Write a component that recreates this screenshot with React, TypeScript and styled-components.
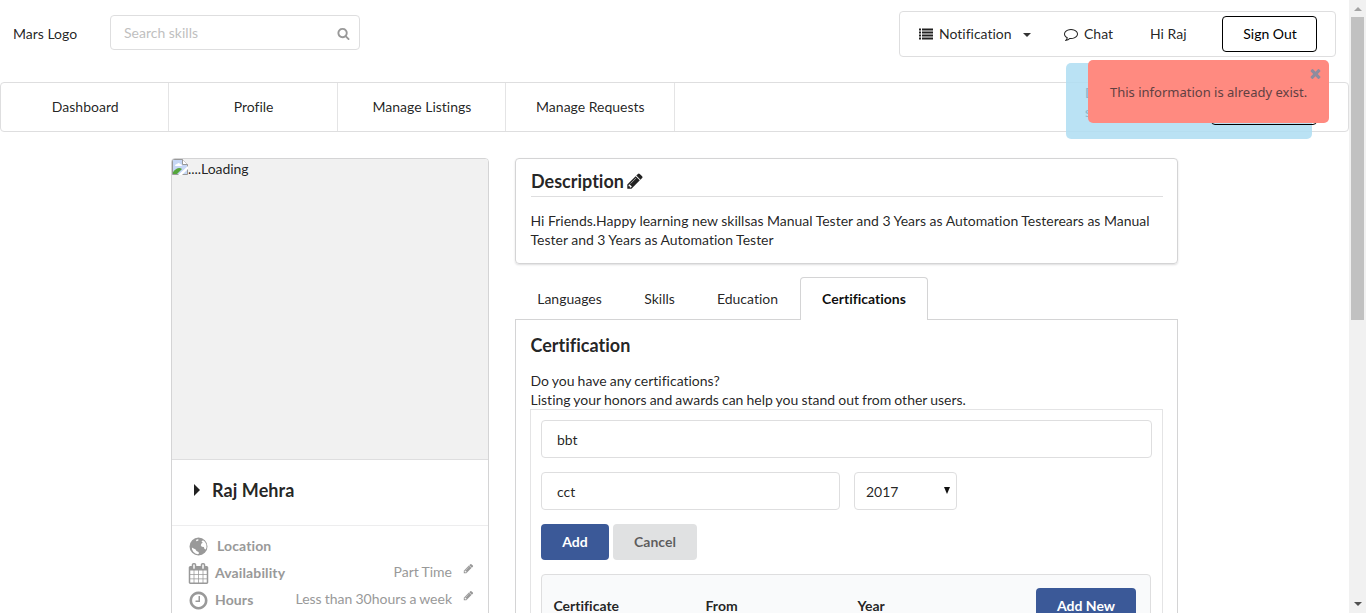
import React from "react";
import styled, { createGlobalStyle, css } from "styled-components";

const Global = createGlobalStyle`
  * { box-sizing: border-box; }
  html, body { margin: 0; padding: 0; overflow: hidden; }
  body {
    background: #fff;
    color: rgba(0,0,0,.87);
    font: 14px/19px Lato, "Liberation Sans", sans-serif;
    font-variant-ligatures: none;
  }
  h3, p { margin: 0; }
  input, button { font-family: inherit; }
`;

const paths = {
  search: "M1216 832q0-185-131.5-316.5t-316.5-131.5-316.5 131.5-131.5 316.5 131.5 316.5 316.5 131.5 316.5-131.5 131.5-316.5zm512 832q0 52-38 90t-90 38q-54 0-90-38l-343-342q-179 124-399 124-143 0-273.5-55.5t-225-150-150-225-55.5-273.5 55.5-273.5 150-225 225-150 273.5-55.5 273.5 55.5 225 150 150 225 55.5 273.5q0 220-124 399l343 343q37 37 37 90z",
  pencil: "M491 1536l91-91-235-235-91 91v107h128v128h107zm523-928q0-22-22-22-10 0-17 7l-542 542q-7 7-7 17 0 22 22 22 10 0 17-7l542-542q7-7 7-17zm-54-192l416 416-832 832h-416v-416zm683 96q0 53-37 90l-166 166-416-416 166-165q36-38 90-38 53 0 91 38l235 234q37 39 37 91z",
  calendar: "M192 1664h288v-288h-288v288zm352 0h320v-288h-320v288zm-352-352h288v-320h-288v320zm352 0h320v-320h-320v320zm-352-384h288v-288h-288v288zm736 736h320v-288h-320v288zm-384-736h320v-288h-320v288zm768 736h288v-288h-288v288zm-384-352h320v-320h-320v320zm-352-864v-288q0-13-9.5-22.5t-22.5-9.5h-64q-13 0-22.5 9.5t-9.5 22.5v288q0 13 9.5 22.5t22.5 9.5h64q13 0 22.5-9.5t9.5-22.5zm736 864h288v-320h-288v320zm-384-384h320v-288h-320v288zm384 0h288v-288h-288v288zm32-480v-288q0-13-9.5-22.5t-22.5-9.5h-64q-13 0-22.5 9.5t-9.5 22.5v288q0 13 9.5 22.5t22.5 9.5h64q13 0 22.5-9.5t9.5-22.5zm384-64v1280q0 52-38 90t-90 38h-1408q-52 0-90-38t-38-90v-1280q0-52 38-90t90-38h128v-96q0-66 47-113t113-47h64q66 0 113 47t47 113v96h384v-96q0-66 47-113t113-47h64q66 0 113 47t47 113v96h128q52 0 90 38t38 90z",
  clock: "M1024 544v448q0 14-9 23t-23 9h-320q-14 0-23-9t-9-23v-64q0-14 9-23t23-9h224v-352q0-14 9-23t23-9h64q14 0 23 9t9 23zm416 352q0-148-73-273t-198-198-273-73-273 73-198 198-73 273 73 273 198 198 273 73 273-73 198-198 73-273zm224 0q0 209-103 385.5t-279.5 279.5-385.5 103-385.5-103-279.5-279.5-103-385.5 103-385.5 279.5-279.5 385.5-103 385.5 103 279.5 279.5 103 385.5z",
  comment: "M896 384q-204 0-381.5 69.5t-282 187.5-104.5 255q0 112 71.5 213.5t201.5 175.5l87 50-27 96q-24 91-70 172 152-63 275-171l43-38 57 6q69 8 130 8 204 0 381.5-69.5t282-187.5 104.5-255-104.5-255-282-187.5-381.5-69.5zm896 512q0 174-120 321.5t-326 233-450 85.5q-70 0-145-8-198 175-460 242-49 14-114 22h-5q-15 0-27-10.5t-16-27.5v-1q-3-4-.5-12t2-10 4.5-9.5l6-9 7-8.5 8-9q7-8 31-34.5t34.5-38 31-39.5 32.5-51 27-59 26-76q-157-89-247.5-220t-90.5-281q0-174 120-321.5t326-233 450-85.5 450 85.5 326 233 120 321.5z",
  times: "M1490 1322q0 40-28 68l-136 136q-28 28-68 28t-68-28l-294-294-294 294q-28 28-68 28t-68-28l-136-136q-28-28-28-68t28-68l294-294-294-294q-28-28-28-68t28-68l136-136q28-28 68-28t68 28l294 294 294-294q28-28 68-28t68 28l136 136q28 28 28 68t-28 68l-294 294 294 294q28 28 28 68z",
  list: "M0 192h256v256H0zM384 192h1408v256H384zM0 576h256v256H0zM384 576h1408v256H384zM0 960h256v256H0zM384 960h1408v256H384zM0 1344h256v256H0zM384 1344h1408v256H384z",
  globe: "M896 128a768 768 0 1 0 0 1536a768 768 0 1 0 0-1536zM1150 470l130-110 160 130 120 210 20 260-60 190-110-40-60-170-170-20-90-130 60-160 110-50zM330 980l150 80 150 60 100 150 170 90 40 130-110 70-200-60-180-160-100-180zM700 330l150-60 70 80-130 80-90 10z",
};

const Svg = styled.svg<{ $size: number }>`
  display: block;
  flex: none;
  width: ${(p) => p.$size}px;
  height: ${(p) => p.$size}px;
  fill: currentColor;
`;
const Icon = ({ name, size, className }: { name: keyof typeof paths; size: number; className?: string }) => (
  <Svg className={className} $size={size} viewBox="0 0 1792 1792"><path fillRule={name === "globe" ? "evenodd" : "nonzero"} d={paths[name]} /></Svg>
);

const Screen = styled.div`
  display: flex;
  width: 1366px;
  height: 613px;
  overflow: hidden;
  position: relative;
`;
const Page = styled.div`width: 1349px; flex: none;`;
const Header = styled.header`
  display: flex;
  align-items: flex-start;
  height: 82px;
  padding: 11px 13px 0;
`;
const Logo = styled.div`width: 97px; padding-top: 13px;`;
const Search = styled.div`
  display: flex;
  align-items: center;
  justify-content: space-between;
  width: 250px;
  height: 35px;
  margin: 4px auto 0 0;
  padding: 2px 9px 0 13px;
  border: 1px solid #dededf;
  border-radius: 4px;
  color: #999;
`;
const SearchInput = styled.input`
  width: 180px;
  padding: 0 0 2px;
  border: 0;
  outline: 0;
  background: none;
  font-size: 14px;
  &::placeholder { color: #bfbfbf; opacity: 1; }
`;
const UserMenu = styled.nav`
  display: flex;
  align-items: center;
  width: 437px;
  height: 46px;
  padding: 0 18px 0 19px;
  border: 1px solid #dededf;
  border-radius: 4px;
`;
const MenuItem = styled.div<{ $w: number; $gap?: number }>`
  display: flex;
  align-items: center;
  gap: ${(p) => p.$gap ?? 6}px;
  width: ${(p) => p.$w}px;
  padding-bottom: 1px;
`;
const Caret = styled.span`
  margin: 2px 0 0 5px;
  border: 4px solid transparent;
  border-top-color: #333;
  border-bottom: 0;
`;
const SignOut = styled.button`
  width: 95px;
  height: 36px;
  margin-left: auto;
  padding: 0 0 2px 1px;
  border: 1px solid #000;
  border-radius: 4px;
  background: #fff;
  color: #000;
  font-size: 14px;
`;
const Tabs = styled.nav`
  display: flex;
  height: 50px;
  border: 1px solid #dededf;
  border-radius: 4px;
`;
const NavTab = styled.div`
  display: flex;
  align-items: center;
  justify-content: center;
  width: 168.4px;
  padding: 0 0 2px 1px;
  border-right: 1px solid #e4e4e5;
`;
const Content = styled.main`
  display: flex;
  align-items: flex-start;
  gap: 26px;
  padding: 26px 0 0 171px;
`;
const Card = styled.aside`
  width: 318px;
  height: 640px;
  border: 1px solid #d4d4d5;
  border-radius: 4px;
  overflow: hidden;
`;
const Photo = styled.div`
  display: flex;
  height: 301px;
  background: #f1f1f1;
  border-bottom: 1px solid #dededf;
  line-height: 20px;
  letter-spacing: -.05px;
`;
const NameRow = styled.div`
  display: flex;
  align-items: center;
  height: 66px;
  padding: 0 0 4px 22px;
  border-bottom: 1px solid #ededee;
  font-size: 18px;
  font-weight: 700;
  letter-spacing: .08px;
`;
const RightCaret = styled.span`
  margin: 0 12px 2px 0;
  border: 6px solid transparent;
  border-left-color: #222;
  border-right: 0;
`;
const Details = styled.div`padding: 7px 14px 0 16px; color: #999;`;
const Detail = styled.div<{ $gap: number }>`
  display: flex;
  align-items: center;
  height: 27px;
  gap: ${(p) => p.$gap}px;
  strong { font-weight: 700; padding-bottom: 2px; letter-spacing: .12px; }
  span { margin-left: auto; padding-bottom: 4px; word-spacing: -.5px; }
`;
const SmallPencil = styled(Icon)`margin: 0 0 11px 5px;`;
const Main = styled.div`width: 663px;`;
const Description = styled.section`
  height: 106px;
  padding: 12px 14px 12px 15px;
  border: 1px solid #d4d4d5;
  border-radius: 4px;
  box-shadow: 0 1px 2px rgba(34,36,38,.15);
  p { margin-left: -.5px; word-spacing: -.1px; }
`;
const Heading = styled.h3<{ $line?: boolean }>`
  display: flex;
  align-items: center;
  gap: 2px;
  font-size: 18px;
  line-height: 22px;
  font-weight: 700;
  ${(p) => p.$line && css`height: 26px; padding-bottom: 5px; margin-bottom: 14px; border-bottom: 1px solid #dededf;`}
`;
const SubTabs = styled.div`
  display: flex;
  height: 43px;
  margin: 13px 0 -1px;
  position: relative;
`;
const SubTab = styled.div<{ $w: number; $active?: boolean }>`
  display: flex;
  align-items: center;
  justify-content: center;
  width: ${(p) => p.$w}px;
  ${(p) => p.$active && css`
    padding-bottom: 1px;
    background: #fff;
    border: 1px solid #d4d4d5;
    border-bottom: 0;
    border-radius: 4px 4px 0 0;
    font-weight: 700;
    color: rgba(0,0,0,.95);
  `}
`;
const Panel = styled.section`
  height: 500px;
  padding: 14px;
  border: 1px solid #d4d4d5;
  ${Heading} { margin-left: .5px; }
`;
const Intro = styled.p`margin: 15px 0 0 .5px; word-spacing: -.5px;`;
const FormBox = styled.div`
  height: 400px;
  padding: 10px;
  border: 1px solid #e4e4e5;
`;
const Row = styled.div<{ $gap: number }>`display: flex; gap: ${(p) => p.$gap}px; margin-bottom: 14px;`;
const Field = styled.input<{ $w: number }>`
  width: ${(p) => p.$w}px;
  height: 38px;
  padding: 0 15px;
  border: 1px solid #dededf;
  border-radius: 4px;
  color: rgba(0,0,0,.87);
  font-size: 14px;
  outline: 0;
`;
const Select = styled.div`
  display: flex;
  align-items: center;
  justify-content: space-between;
  width: 103px;
  height: 38px;
  padding: 0 6px 0 11px;
  border: 1px solid #dededf;
  border-radius: 4px;
`;
const SelectArrow = styled.i`
  margin-bottom: 2px;
  border: 3.5px solid transparent;
  border-top: 7px solid #111;
  border-bottom: 0;
`;
const Button = styled.button<{ $w: number; $muted?: boolean }>`
  width: ${(p) => p.$w}px;
  height: 36px;
  padding: 0 0 2px;
  border: 0;
  border-radius: 4px;
  background: ${(p) => (p.$muted ? "#e0e1e2" : "#3b5998")};
  color: ${(p) => (p.$muted ? "rgba(0,0,0,.6)" : "#fff")};
  font-size: 14px;
  font-weight: 700;
`;
const TableHead = styled.div`
  display: flex;
  align-items: flex-start;
  width: 610px;
  height: 70px;
  padding: 13px 14px 0 11.5px;
  border: 1px solid #dededf;
  border-radius: 4px 4px 0 0;
  background: #f9fafb;
`;
const Th = styled.div<{ $w: number }>`width: ${(p) => p.$w}px; padding-top: 8px; font-weight: 700;`;
const Toast = styled.div<{ $error?: boolean }>`
  position: absolute;
  font-size: 14px;
  ${(p) => p.$error ? css`
    left: 1088px; top: 60px; width: 241px; height: 63px; padding: 23px 22px;
    border-radius: 5px; background: #ff8a80; color: #614042;
    font-family: "Noto Sans", sans-serif; font-size: 13px; white-space: nowrap;
  ` : css`
    left: 1066px; top: 63px; width: 246px; height: 76px; padding: 20px 19px;
    border-radius: 5px; background: rgba(177,222,243,.88); color: #8ab5ca;
  `}
`;
const GhostButton = styled.div`
  position: absolute;
  left: 1211px;
  top: 89px;
  width: 106px;
  height: 36px;
  border: 1px solid #000;
  border-radius: 4px;
`;
const Close = styled(Icon)`position: absolute; right: 6px; top: 6px; color: #8e8c9e;`;
const ScrollTrack = styled.div`
  display: flex;
  flex-direction: column;
  align-items: center;
  width: 17px;
  height: 613px;
  padding: 7px 0;
  background: #f1f1f1;
`;
const ScrollArrow = styled.i<{ $down?: boolean }>`
  border: 4px solid transparent;
  ${(p) => p.$down ? css`margin-top: auto; border-top-color: #505050; border-bottom: 0;` : css`border-bottom-color: #a3a3a3; border-top: 0;`}
`;
const Thumb = styled.div`width: 13px; height: 303px; margin-top: 6px; background: #c1c1c1;`;

const BrokenImage = () => (
  <svg width="16" height="16" viewBox="0 0 16 16">
    <path d="M.5.5h10l5 5v10H.5z" fill="#c6d7f5" stroke="#999" />
    <path d="M10.5.5v5h5" fill="#fff" stroke="#999" />
    <path d="M3 7q0-2 2-2 2-2 3 0 2 0 2 2z" fill="#fff" />
    <path d="M1 15v-2q5-6 9-3l-5 5z" fill="#55a63a" />
    <path d="M6 16l10-9v3l-6 6z" fill="#fff" />
  </svg>
);

export default function App() {
  return (
    <Screen>
      <Global />
      <Page>
        <Header>
          <Logo>Mars Logo</Logo>
          <Search><SearchInput placeholder="Search skills" /><Icon name="search" size={13} /></Search>
          <UserMenu>
            <MenuItem $w={145}><Icon name="list" size={14} />Notification<Caret /></MenuItem>
            <MenuItem $w={86}><Icon name="comment" size={14} />Chat</MenuItem>
            <MenuItem $w={60}>Hi Raj</MenuItem>
            <SignOut>Sign Out</SignOut>
          </UserMenu>
        </Header>
        <Tabs>
          {["Dashboard", "Profile", "Manage Listings", "Manage Requests"].map((t) => <NavTab key={t}>{t}</NavTab>)}
        </Tabs>
        <Content>
          <Card>
            <Photo><BrokenImage />....Loading</Photo>
            <NameRow><RightCaret />Raj Mehra</NameRow>
            <Details>
              <Detail $gap={8}><Icon name="globe" size={21} /><strong>Location</strong></Detail>
              <Detail $gap={6}><Icon name="calendar" size={21} /><strong>Availability</strong><span>Part Time</span><SmallPencil name="pencil" size={11} /></Detail>
              <Detail $gap={6}><Icon name="clock" size={21} /><strong>Hours</strong><span>Less than 30hours a week</span><SmallPencil name="pencil" size={11} /></Detail>
            </Details>
          </Card>
          <Main>
            <Description>
              <Heading $line>Description<Icon name="pencil" size={18} /></Heading>
              <p>Hi Friends.Happy learning new skillsas Manual Tester and 3 Years as Automation Testerears as Manual Tester and 3 Years as Automation Tester</p>
            </Description>
            <SubTabs>
              <SubTab $w={109}>Languages</SubTab>
              <SubTab $w={71}>Skills</SubTab>
              <SubTab $w={105}>Education</SubTab>
              <SubTab $w={128} $active>Certifications</SubTab>
            </SubTabs>
            <Panel>
              <Heading>Certification</Heading>
              <Intro>Do you have any certifications?<br />Listing your honors and awards can help you stand out from other users.</Intro>
              <FormBox>
                <Row $gap={0}><Field $w={611} defaultValue="bbt" /></Row>
                <Row $gap={14}><Field $w={299} defaultValue="cct" /><Select>2017<SelectArrow /></Select></Row>
                <Row $gap={4}><Button $w={68}>Add</Button><Button $w={84} $muted>Cancel</Button></Row>
                <TableHead>
                  <Th $w={152}>Certificate</Th><Th $w={152}>From</Th><Th $w={178.5}>Year</Th>
                  <Button $w={100}>Add New</Button>
                </TableHead>
              </FormBox>
            </Panel>
          </Main>
        </Content>
      </Page>
      <ScrollTrack><ScrollArrow /><Thumb /><ScrollArrow $down /></ScrollTrack>
      <Toast>D<br />s</Toast>
      <GhostButton />
      <Toast $error>This information is already exist.<Close name="times" size={15} /></Toast>
    </Screen>
  );
}
